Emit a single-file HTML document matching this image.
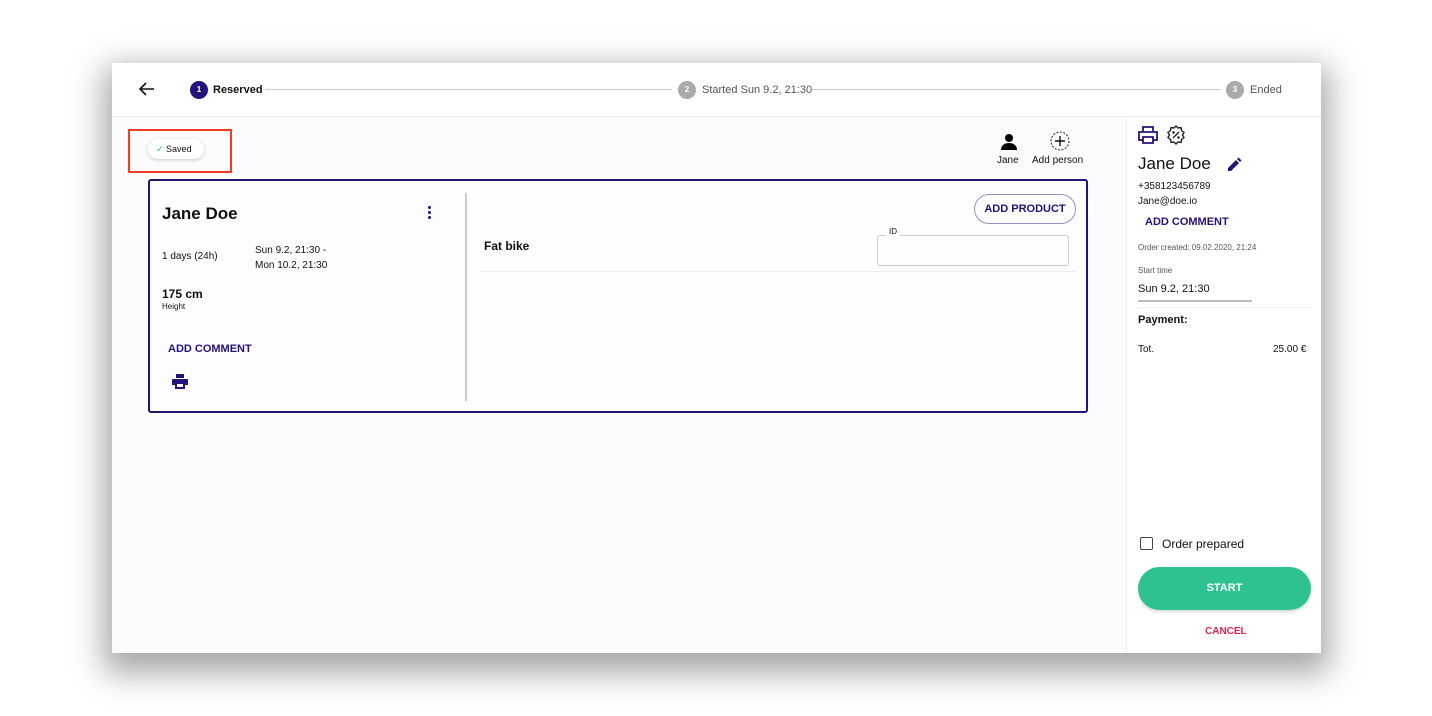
<!DOCTYPE html><html><head><style>
*{box-sizing:border-box;margin:0;padding:0}
body{width:1432px;height:716px;background:#fff;font-family:"Liberation Sans",sans-serif;color:#111;position:relative;overflow:hidden}
.win{position:absolute;left:112px;top:63px;width:1209px;height:590px;background:#fbfafc;box-shadow:0 12px 30px 8px rgba(0,0,0,.35)}
.top{position:absolute;left:0;top:0;width:1209px;height:54px;background:#fff;border-bottom:1px solid #eee}
.a{position:absolute;font-size:11px}
.circ{position:absolute;width:18px;height:18px;border-radius:50%;color:#fff;font-size:8px;font-weight:bold;text-align:center;line-height:18px}
.line{position:absolute;height:1px;background:#ccc;top:26px}
.blue{color:#24137a;font-weight:bold}
</style></head><body>
<div class="win">
<div class="top">
<svg style="position:absolute;left:27px;top:19px" width="16" height="14" viewBox="0 0 16 14"><path d="M15 7H2M7 1L1 7l6 6" stroke="#111" stroke-width="1.6" fill="none"/></svg>
<div class="circ" style="left:78px;top:18px;background:#24137a">1</div>
<div class="a" style="left:101px;top:21px;font-weight:bold">Reserved</div>
<div class="line" style="left:153px;width:407px"></div>
<div class="circ" style="left:566px;top:18px;background:#aaa">2</div>
<div class="a" style="left:590px;top:21px;color:#555">Started Sun 9.2, 21:30</div>
<div class="line" style="left:700px;width:408px"></div>
<div class="circ" style="left:1114px;top:18px;background:#aaa">3</div>
<div class="a" style="left:1138px;top:21px;color:#555">Ended</div>
</div>
<div style="position:absolute;left:16px;top:66px;width:104px;height:44px;border:2px solid #f03c24"></div>
<div style="position:absolute;left:36px;top:76px;width:56px;height:20px;border-radius:10px;background:#fff;box-shadow:0 1px 3px rgba(0,0,0,.2);font-size:9px;line-height:20px;padding-left:8px"><span style="color:#2fbf8f">✓</span> Saved</div>
<svg style="position:absolute;left:889px;top:70px" width="16" height="18" viewBox="0 0 16 18"><circle cx="8" cy="5" r="4"/><path d="M0 17c0-5 4-7 8-7s8 2 8 7z"/></svg>
<div class="a" style="left:885px;top:92px;font-size:10px">Jane</div>
<svg style="position:absolute;left:938px;top:68px" width="20" height="20"><circle cx="10" cy="10" r="9" fill="none" stroke="#222" stroke-dasharray="2 1.5"/><path d="M10 5v10M5 10h10" stroke="#111" stroke-width="1.4"/></svg>
<div class="a" style="left:920px;top:92px;font-size:10px">Add person</div>
<div style="position:absolute;left:36px;top:116px;width:940px;height:234px;border:2px solid #24137a;border-radius:3px;background:#fdfcfe">
<div class="a" style="left:12px;top:23px;font-size:17px;font-weight:bold">Jane Doe</div>
<div style="position:absolute;left:278px;top:24px;width:3px;height:14px;background:radial-gradient(circle,#24137a 1.4px,transparent 1.6px) 0 0/3px 5px"></div>
<div class="a" style="left:12px;top:70px;font-size:10px">1 days (24h)</div>
<div class="a" style="left:105px;top:62px;font-size:10px;line-height:15px">Sun 9.2, 21:30 -<br>Mon 10.2, 21:30</div>
<div class="a" style="left:12px;top:106px;font-size:12px;font-weight:bold">175 cm</div>
<div class="a" style="left:12px;top:121px;font-size:8px">Height</div>
<div class="a blue" style="left:18px;top:162px">ADD COMMENT</div>
<svg style="position:absolute;left:22px;top:193px" width="16" height="15" viewBox="0 0 16 15"><path fill="#24137a" d="M4 0h8v4H4zM1 5h14a1 1 0 0 1 1 1v5h-3v4H3v-4H0V6a1 1 0 0 1 1-1zM5 10v3h6v-3z"/></svg>
<div style="position:absolute;left:315px;top:12px;width:2px;height:208px;background:#ccc"></div>
<div style="position:absolute;left:824px;top:13px;width:102px;height:30px;border:1px solid #9a90c8;border-radius:15px;text-align:center;line-height:28px;font-size:11px" class="blue">ADD PRODUCT</div>
<div class="a" style="left:334px;top:58px;font-size:12px;font-weight:bold">Fat bike</div>
<div style="position:absolute;left:727px;top:54px;width:192px;height:31px;border:1px solid #ccc;border-radius:3px"></div>
<div class="a" style="left:736px;top:46px;font-size:8px;background:#fdfcfe;padding:0 3px">ID</div>
<div style="position:absolute;left:330px;top:90px;width:597px;height:1px;background:#eee"></div>
</div>
<div style="position:absolute;left:1014px;top:55px;width:195px;height:535px;background:#fff;border-left:1px solid #eee">
<svg style="position:absolute;left:11px;top:8px" width="20" height="18" viewBox="0 0 20 18"><path fill="none" stroke="#24137a" stroke-width="1.8" d="M5 5V1h10v4M5 14H1V6h18v8h-4M5 11h10v6H5z"/></svg>
<svg style="position:absolute;left:39px;top:7px" width="20" height="20" viewBox="0 0 20 20"><path fill="none" stroke="#222" stroke-width="1.4" d="M10 1l2 2 3-.5.5 3 2.5 2-1.5 2.5 1.5 2.5-2.5 2-.5 3-3-.5-2 2-2-2-3 .5-.5-3L2 12.5 3.5 10 2 7.5l2.5-2 .5-3 3 .5z M7 13l6-6"/><circle cx="7.5" cy="7.5" r="1.2"/><circle cx="12.5" cy="12.5" r="1.2"/></svg>
<div class="a" style="left:11px;top:36px;font-size:17px">Jane Doe</div>
<svg style="position:absolute;left:101px;top:39px" width="14" height="14" viewBox="0 0 14 14"><path fill="#24137a" d="M0 11v3h3l8-8-3-3zM9 2l3 3 1.5-1.5-3-3z"/></svg>
<div class="a" style="left:11px;top:63px;font-size:10px">+358123456789</div>
<div class="a" style="left:11px;top:78px;font-size:10px">Jane@doe.io</div>
<div class="a blue" style="left:18px;top:98px">ADD COMMENT</div>
<div class="a" style="left:11px;top:125px;font-size:8px;color:#555">Order created: 09.02.2020, 21:24</div>
<div class="a" style="left:11px;top:148px;font-size:8px;color:#555">Start time</div>
<div class="a" style="left:11px;top:165px;font-size:11px">Sun 9.2, 21:30</div>
<div style="position:absolute;left:11px;top:182px;width:114px;height:2px;background:#bbb"></div>
<div style="position:absolute;left:11px;top:189px;width:174px;height:1px;background:#f0f0f0"></div>
<div class="a" style="left:11px;top:196px;font-size:11px;font-weight:bold">Payment:</div>
<div class="a" style="left:11px;top:226px;font-size:10px">Tot.</div>
<div class="a" style="left:146px;top:226px;font-size:10px">25.00 €</div>
<div style="position:absolute;left:13px;top:419px;width:13px;height:13px;border:1.5px solid #444;border-radius:2px"></div>
<div class="a" style="left:35px;top:419px;font-size:12px">Order prepared</div>
<div style="position:absolute;left:11px;top:449px;width:173px;height:43px;border-radius:22px;background:#2ec291;color:#fff;font-weight:bold;font-size:11px;text-align:center;line-height:43px;box-shadow:0 2px 3px rgba(0,0,0,.15)">START</div>
<div class="a" style="left:78px;top:508px;font-size:10px;color:#e0244e;font-weight:bold">CANCEL</div>
</div>
</div>
</body></html>
